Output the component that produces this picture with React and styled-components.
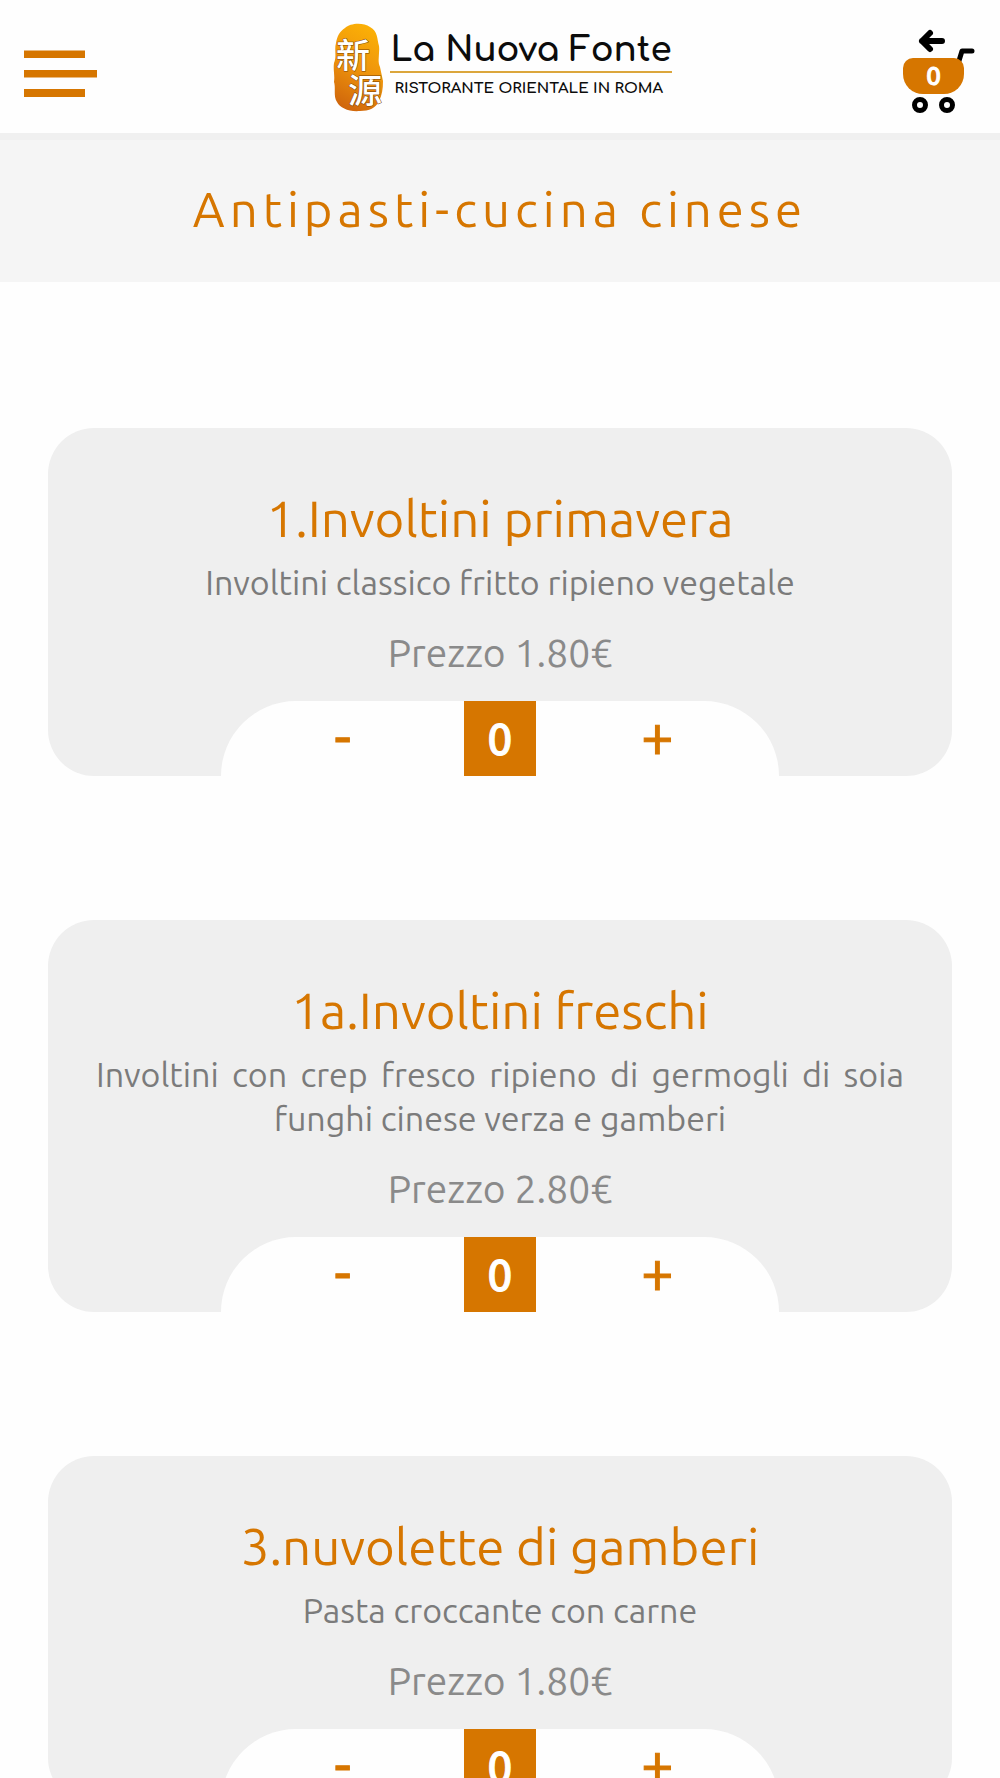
import { useState } from "react";
import styled, { createGlobalStyle } from "styled-components";

const ORANGE = "#d67600";

const GlobalStyle = createGlobalStyle`
  * {
    box-sizing: border-box;
  }

  body {
    margin: 0;
    background: #fefefe;
    font-family: Ubuntu, "Noto Sans", "Open Sans", sans-serif;
  }
`;

const Header = styled.header`
  display: grid;
  grid-template-columns: 80px 1fr 80px;
  align-items: center;
  height: 140px;
  padding: 7px 24px 0;
  border-bottom: 7px solid #f0f0f0;
`;

const IconButton = styled.button`
  position: relative;
  display: flex;
  padding: 0;
  border: 0;
  background: none;
  cursor: pointer;
  justify-self: ${props => props.$align || "start"};
`;

const CartBadge = styled.span`
  position: absolute;
  top: 32px;
  left: 0;
  width: 61px;
  height: 36px;
  border-radius: 10px 10px 20px 20px;
  background: ${ORANGE};
  color: white;
  font-family: Ubuntu, "Noto Sans", sans-serif;
  font-size: 26px;
  font-weight: 500;
  -webkit-text-stroke: 1px white;
  line-height: 36px;
  text-align: center;
`;

const Logo = styled.a`
  display: flex;
  align-items: center;
  justify-content: center;
  gap: 5px;
  padding: 0 0 4px 5px;
  color: #0c0c0c;
  text-decoration: none;
`;

const LogoText = styled.span`
  display: flex;
  flex-direction: column;
  padding-bottom: 6px;
`;

const LogoName = styled.span`
  font-family: Comfortaa, Quicksand, Lato, sans-serif;
  font-size: 34px;
  font-weight: 700;
  line-height: 42px;
  white-space: nowrap;
`;

const LogoTagline = styled.span`
  padding: 4px 0 0 4px;
  border-top: 2px solid #dba63c;
  font-family: Comfortaa, Quicksand, Lato, sans-serif;
  font-size: 15px;
  font-weight: 700;
  line-height: 24px;
  white-space: nowrap;
`;

const PageTitle = styled.h1`
  margin: 0;
  padding: 34px 24px 38px;
  background: #f5f5f5;
  color: ${ORANGE};
  font-size: 49px;
  font-weight: 400;
  letter-spacing: 5px;
  line-height: 70px;
  text-align: center;
`;

const DishList = styled.main`
  display: flex;
  flex-direction: column;
  gap: 144px;
  padding: 146px 48px;
`;

const Card = styled.article`
  display: flex;
  flex-direction: column;
  align-items: center;
  padding: 60px 48px 0;
  border-radius: 46px;
  background: #efefef;
`;

const DishName = styled.h2`
  margin: 0;
  color: ${ORANGE};
  font-size: 51px;
  font-weight: 400;
  line-height: 60px;
  text-align: center;
`;

const Description = styled.p`
  width: 100%;
  margin: 12px 0 0;
  color: #7b7b7b;
  font-size: 34px;
  line-height: 44px;
  text-align: justify;
  text-align-last: center;
`;

const Price = styled.p`
  margin: 25px 0 24px;
  color: #8a8a8a;
  font-size: 39px;
  line-height: 48px;
`;

const Stepper = styled.div`
  display: grid;
  grid-template-columns: 1fr 72px 1fr;
  width: 69%;
  height: 75px;
  border-radius: 75px 75px 0 0;
  background: #fefefe;
  overflow: hidden;
`;

const StepButton = styled.button`
  padding: 0 0 5px;
  border: 0;
  background: none;
  color: ${ORANGE};
  font-family: inherit;
  font-size: 58px;
  font-weight: 400;
  line-height: 70px;
  cursor: pointer;
  -webkit-text-stroke: 1px ${ORANGE};
`;

const Quantity = styled.output`
  background: ${ORANGE};
  color: white;
  font-size: 44px;
  font-weight: 500;
  line-height: 75px;
  text-align: center;
  -webkit-text-stroke: 1px white;
`;

const dishes = [
  { name: "1.Involtini primavera", description: "Involtini classico fritto ripieno vegetale", price: "1.80" },
  { name: "1a.Involtini freschi", description: "Involtini con crep fresco ripieno di germogli di soia funghi cinese verza e gamberi", price: "2.80" },
  { name: "3.nuvolette di gamberi", description: "Pasta croccante con carne", price: "1.80" },
];

const MenuIcon = () => (
  <svg width="73" height="56" viewBox="0 0 73 56" fill={ORANGE}>
    <rect y="8.5" width="61" height="7.5" />
    <rect y="28" width="73" height="7.5" />
    <rect y="47" width="61" height="8" />
  </svg>
);

const CartIcon = () => (
  <svg width="73" height="88" viewBox="0 0 73 88" fill="none" stroke="#000" strokeWidth="6" strokeLinecap="round" strokeLinejoin="round">
    <path d="M39 15H19M27 7l-8 8 8 8" />
    <path d="M69 25H59L55 38" strokeWidth="5" />
    <circle cx="17" cy="79" r="5.5" strokeWidth="5" />
    <circle cx="44" cy="79" r="5.5" strokeWidth="5" />
  </svg>
);

const SealIcon = () => (
  <svg width="52" height="90" viewBox="0 0 52 90">
    <defs>
      <linearGradient id="seal" x1="0.6" y1="0" x2="0.3" y2="1">
        <stop offset="0" stopColor="#fbb006" />
        <stop offset="0.5" stopColor="#ee930c" />
        <stop offset="1" stopColor="#cf650c" />
      </linearGradient>
    </defs>
    <path
      d="M12 5C17 0 30-1 37 4C45 8 44 16 46 23C47 30 44 38 47 44L50 58C50 66 49 72 46 78C43 85 36 88 27 88C16 89 7 85 4 79C0 73 3 65 1 59C2 52 0 47 1 40C4 33 1 27 3 20C4 13 7 8 12 5Z"
      fill="url(#seal)"
    />
    <g fill="#fff" stroke="#7c4307" strokeWidth="1" paintOrder="stroke" fontFamily='"Noto Sans CJK TC", sans-serif' fontWeight="500">
      <text x="3" y="45" fontSize="34">新</text>
      <text x="15" y="80" fontSize="34">源</text>
    </g>
  </svg>
);

const DishCard = ({ dish, quantity, onChange }) => (
  <Card>
    <DishName>{dish.name}</DishName>
    <Description>{dish.description}</Description>
    <Price>Prezzo {dish.price}€</Price>
    <Stepper>
      <StepButton aria-label={`Togli ${dish.name}`} onClick={() => onChange(-1)}>-</StepButton>
      <Quantity>{quantity}</Quantity>
      <StepButton aria-label={`Aggiungi ${dish.name}`} onClick={() => onChange(1)}>+</StepButton>
    </Stepper>
  </Card>
);

const App = () => {
  const [quantities, setQuantities] = useState(dishes.map(() => 0));
  const total = quantities.reduce((sum, quantity) => sum + quantity, 0);

  const changeQuantity = (index, step) => {
    setQuantities(quantities.map((quantity, i) => i === index ? Math.max(0, quantity + step) : quantity));
  };

  return (
    <>
      <GlobalStyle />
      <Header>
        <IconButton aria-label="Menu">
          <MenuIcon />
        </IconButton>
        <Logo href="/">
          <SealIcon />
          <LogoText>
            <LogoName>La Nuova Fonte</LogoName>
            <LogoTagline>RISTORANTE ORIENTALE IN ROMA</LogoTagline>
          </LogoText>
        </Logo>
        <IconButton aria-label="Carrello" $align="end">
          <CartIcon />
          <CartBadge>{total}</CartBadge>
        </IconButton>
      </Header>
      <PageTitle>Antipasti-cucina cinese</PageTitle>
      <DishList>
        {dishes.map((dish, index) => (
          <DishCard
            key={dish.name}
            dish={dish}
            quantity={quantities[index]}
            onChange={step => changeQuantity(index, step)}
          />
        ))}
      </DishList>
    </>
  );
};

export default App;
